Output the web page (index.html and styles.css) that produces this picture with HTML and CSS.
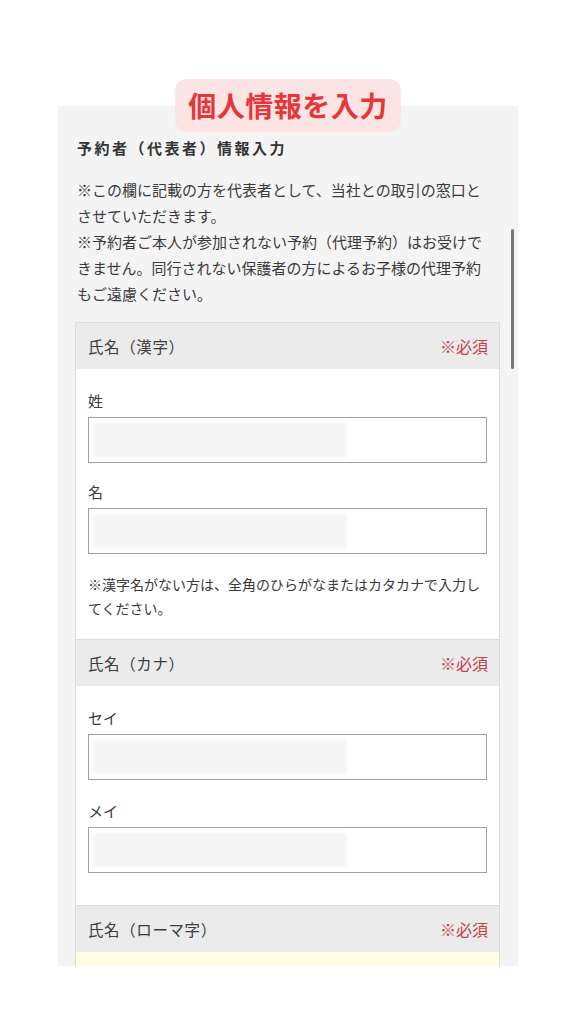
FILE: index.html
```html
<!DOCTYPE html>
<html lang="ja">
<head>
<meta charset="utf-8">
<title>個人情報を入力</title>
<link rel="stylesheet" href="styles.css">
</head>
<body>
<div class="page">
  <div class="badge-wrap"><div class="badge">個人情報を入力</div></div>
  <section class="panel">
    <div class="scrollbar"></div>
    <h2 class="heading">予約者（代表者）情報入力</h2>
    <p class="intro">※この欄に記載の方を代表者として、当社との取引の窓口とさせていただきます。<br>※予約者ご本人が参加されない予約（代理予約）はお受けできません。同行されない保護者の方によるお子様の代理予約もご遠慮ください。</p>
    <div class="card">
      <div class="card-head"><span class="head-label">氏名（漢字）</span><span class="req">※必須</span></div>
      <div class="card-body">
        <div class="field-label">姓</div>
        <div class="input"><div class="blur"></div></div>
        <div class="field-label second">名</div>
        <div class="input"><div class="blur"></div></div>
        <p class="note">※漢字名がない方は、全角のひらがなまたはカタカナで入力してください。</p>
      </div>
      <div class="card-head"><span class="head-label">氏名（カナ）</span><span class="req">※必須</span></div>
      <div class="card-body tall">
        <div class="field-label">セイ</div>
        <div class="input"><div class="blur"></div></div>
        <div class="field-label second">メイ</div>
        <div class="input"><div class="blur"></div></div>
      </div>
      <div class="card-head"><span class="head-label">氏名（ローマ字）</span><span class="req">※必須</span></div>
      <div class="card-body yellow"></div>
    </div>
  </section>
</div>
</body>
</html>
```
FILE: styles.css
```css
* { box-sizing: border-box; }
body {
  margin: 0;
  background: #ffffff;
  font-family: "Noto Sans CJK JP", "Noto Sans", sans-serif;
  color: #333333;
}
.page {
  padding-top: 79px;
}
.badge-wrap {
  display: flex;
  justify-content: center;
  position: relative;
  z-index: 2;
  margin-bottom: -26px;
}
.badge {
  height: 53px;
  line-height: 53px;
  padding: 0 13px;
  background: #fde4e4;
  border-radius: 12px;
  color: #e5363b;
  font-weight: 700;
  font-size: 28px;
  letter-spacing: 0.5px;
}
.panel {
  position: relative;
  margin: 0 58px;
  height: 860px;
  overflow: hidden;
  background: #f4f4f4;
  padding: 30px 18px 0 17px;
}
.scrollbar {
  position: absolute;
  top: 123px;
  right: 4px;
  width: 3.5px;
  height: 140px;
  background: #777777;
  border-radius: 2px;
}
.heading {
  margin: 0 0 0 2px;
  font-size: 15px;
  line-height: 24px;
  font-weight: 700;
  letter-spacing: 2.5px;
  color: #333333;
}
.intro {
  margin: 17px 0 0 2px;
  padding-right: 10px;
  font-size: 15px;
  line-height: 26px;
  color: #3a3a3a;
}
.card {
  margin-top: 15px;
  border: 1px solid #dcdcdc;
  background: #ffffff;
}
.card-head {
  display: flex;
  justify-content: space-between;
  align-items: center;
  height: 47px;
  padding: 0 11px 0 12px;
  background: #ebebeb;
  border-top: 1px solid #dcdcdc;
}
.card-head:first-child { border-top: none; height: 46px; }
.head-label {
  font-size: 15.5px;
  letter-spacing: 0.6px;
  color: #3d3d3d;
}
.req {
  font-size: 16px;
  color: #c8414a;
}
.card-body {
  padding: 21px 12px 19px 12px;
}
.card-body.tall { padding-bottom: 32px; }
.field-label {
  font-size: 15px;
  line-height: 22px;
  color: #3a3a3a;
  margin-bottom: 5px;
}
.field-label.second { margin-top: 18px; }
.card-body.tall .field-label.second { margin-top: 20px; }
.input {
  height: 46px;
  border: 1.5px solid #a0a0a0;
  background: #ffffff;
  padding: 5px 4px;
}
.blur {
  width: 254px;
  height: 34px;
  background: #f5f5f5;
  filter: blur(1px);
}
.note {
  margin: 18px 0 0 0;
  font-size: 14px;
  line-height: 24px;
  color: #3a3a3a;
}
.card-body.yellow {
  height: 40px;
  padding: 0;
  background: #fffde6;
}
```
